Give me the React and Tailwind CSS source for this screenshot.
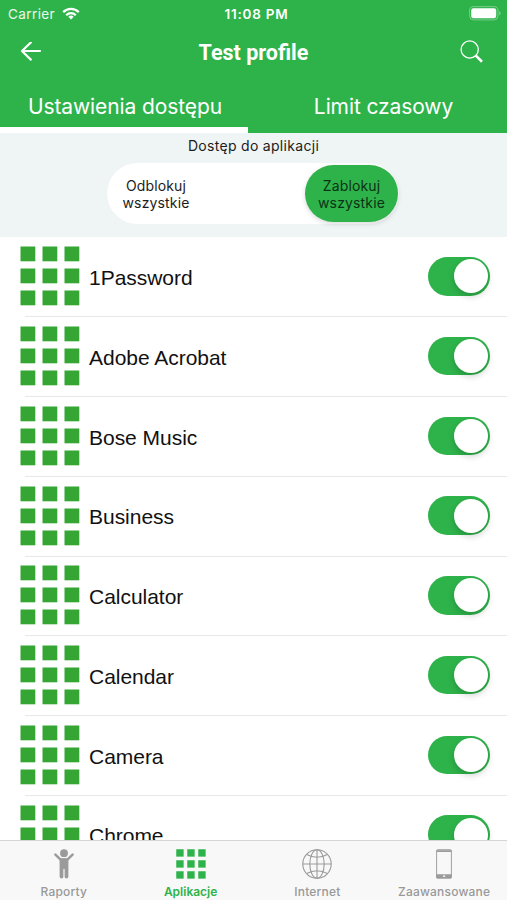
const APPS = [
  "1Password",
  "Adobe Acrobat",
  "Bose Music",
  "Business",
  "Calculator",
  "Calendar",
  "Camera",
  "Chrome"
];

function GridIcon({ className }) {
  return (
    <svg viewBox="-0.5 -0.5 60 60" className={className} fill="currentColor">
      {[0, 22, 44].map((y) =>
        [0, 22, 44].map((x) => <rect key={`${x}-${y}`} x={x} y={y} width="14.8" height="14.8" />)
      )}
    </svg>
  );
}

function WifiIcon() {
  return (
    <svg viewBox="0 0 18 13" className="ml-[7px] h-[13px] w-[18px]" fill="none" stroke="white" strokeWidth="2.2">
      <path d="M1.2 5.1a11 11 0 0 1 15.6 0" />
      <path d="M4.2 8.2a6.8 6.8 0 0 1 9.6 0" />
      <path d="M9 12.4 6.3 9.8a3.9 3.9 0 0 1 5.4 0z" fill="white" stroke="none" />
    </svg>
  );
}

function BatteryIcon() {
  return (
    <svg viewBox="0 0 32 15" className="h-[15px] w-8" fill="none">
      <rect x="0.6" y="0.6" width="28.4" height="13.3" rx="4" stroke="white" strokeOpacity="0.35" />
      <rect x="2.2" y="2.3" width="25" height="9.9" rx="2.2" fill="white" />
      <path d="M30.4 5v4.6c1.4-.8 1.4-3.8 0-4.6z" fill="white" fillOpacity="0.5" />
    </svg>
  );
}

function PersonIcon() {
  return (
    <svg viewBox="0 0 20 30" className="h-[30px] w-5" fill="#9b9b9b">
      <circle cx="10" cy="4.2" r="3.9" />
      <path
        d="M1.4 5.6 6.6 10.6H13.4L18.6 5.6"
        fill="none"
        stroke="#9b9b9b"
        strokeWidth="2.5"
        strokeLinecap="round"
        strokeLinejoin="round"
      />
      <path d="M5.6 9.6h8.8v18a1.9 1.9 0 0 1-3.8 0V20H9.4v7.6a1.9 1.9 0 0 1-3.8 0z" />
    </svg>
  );
}

function GlobeIcon() {
  return (
    <svg viewBox="0 0 30 30" className="size-[30px]" fill="none" stroke="#9b9b9b" strokeWidth="1.1">
      <circle cx="15" cy="15" r="14.2" />
      <ellipse cx="15" cy="15" rx="7.2" ry="14.2" />
      <path d="M15 .8v28.4M.8 15h28.4M4.6 5.6q10.4 5.4 20.8 0M4.6 24.4q10.4-5.4 20.8 0" />
    </svg>
  );
}

function PhoneIcon() {
  return (
    <svg viewBox="0 0 16 30" className="h-[30px] w-4">
      <rect x="0.6" y="0.7" width="14.8" height="28.5" rx="1" fill="none" stroke="#a0a0a0" />
      <path d="M.4 1.2h15.2v1.9H.4zM.4 25.2h15.2v4H.4z" fill="#9b9b9b" />
      <path d="M7 27.2h2.2" stroke="#f8f8f8" strokeWidth="1.4" />
    </svg>
  );
}

function Switch() {
  return (
    <div className="flex h-[38.5px] w-[62.5px] items-center justify-end rounded-full bg-[#2eb34b] pr-[2px]">
      <div className="size-[34px] rounded-full bg-white shadow-[0_3px_7px_rgba(0,0,0,0.2)]" />
    </div>
  );
}

function AppRow({ name }) {
  return (
    <div className="flex h-[79.75px] shrink-0 items-center pr-[17px] pl-5">
      <GridIcon className="size-[60px] shrink-0 text-[#35a634]" />
      <span className="ml-[9px] flex-1 pt-[3px] font-['Liberation_Sans',sans-serif] text-[21px] tracking-[-0.03px] text-[#111]">
        {name}
      </span>
      <Switch />
    </div>
  );
}

function TabItem({ icon, label, active }) {
  return (
    <div className="flex flex-1 flex-col items-center pt-2 pl-[1px]">
      {icon}
      <span
        className={`mt-[5px] text-[12px] leading-4 ${
          active ? "font-semibold text-[#2eb34b]" : "font-medium tracking-[0.2px] text-[#999]"
        }`}
      >
        {label}
      </span>
    </div>
  );
}

function Header() {
  return (
    <header className="h-[132.5px] shrink-0 bg-[#2eb34b] text-white">
      <div className="grid h-[27px] grid-cols-3 items-center pr-[6px] pl-[8px]">
        <div className="flex items-center">
          <span className="pt-px text-[13.5px] tracking-[0.4px] text-white/90">Carrier</span>
          <WifiIcon />
        </div>
        <span className="pt-px pl-[4px] text-center text-[13.5px] font-semibold tracking-[0.8px]">11:08 PM</span>
        <div className="flex justify-end">
          <BatteryIcon />
        </div>
      </div>
      <div className="flex h-[50px] items-center justify-between pr-6 pl-5">
        <svg viewBox="0 0 22 20" className="h-5 w-[22px]" fill="none" stroke="white" strokeWidth="2.2">
          <path d="M10.8 .5 2 9l8.8 8.6M2 9h18" strokeLinecap="round" strokeLinejoin="round" />
        </svg>
        {/* zero tracking keeps the "fi" ligature */}
        <h1 className="pt-[3px] pl-[5px] font-[Roboto,sans-serif] text-[21.5px] font-bold">Test profile</h1>
        <svg viewBox="0 0 24 24" className="-mr-px size-6" fill="none" stroke="white">
          <circle cx="9.7" cy="9.5" r="8.6" strokeWidth="1.3" />
          <path d="M15.6 15.4 22 21.7" strokeWidth="2.6" />
        </svg>
      </div>
      <div className="flex h-[55.5px] text-[21px] leading-[26px] tracking-[-0.1px]">
        <div className="w-[248px] border-b-[6px] border-white pt-[17px] pl-[2px] text-center">Ustawienia dostępu</div>
        <div className="flex-1 pt-[17px] pl-[12px] text-center">Limit czasowy</div>
      </div>
    </header>
  );
}

export default function App() {
  return (
    <div className="flex h-[900px] w-[507px] flex-col overflow-hidden bg-white font-[Inter,sans-serif]">
      <Header />
      <section className="flex h-[104px] shrink-0 flex-col items-center bg-[#eff4f5] text-[14px] text-[#1c1c1c]">
        <p className="mt-1 leading-[18px] tracking-[0.3px]">Dostęp do aplikacji</p>
        <div className="mt-2 mr-[1px] flex h-[61px] w-[292px] items-center justify-between rounded-full bg-white pr-[1px] pl-[13px] text-center leading-[17px] tracking-[0.15px]">
          <span className="w-[72px] pt-px">Odblokuj wszystkie</span>
          <span className="flex h-[57px] w-[93px] items-center justify-center rounded-full bg-[#2eb34b] px-2 text-[#0b3213] shadow-[0_2px_5px_rgba(0,0,0,0.15)]">
            <span className="w-[72px] pt-px">Zablokuj wszystkie</span>
          </span>
        </div>
      </section>
      <main className="flex min-h-0 flex-1 flex-col overflow-hidden">
        {APPS.map((name, index) => (
          <div key={name} className="shrink-0">
            {index > 0 && <div className="-mb-px ml-[25px] h-px bg-[#e6e8e9]" />}
            <AppRow name={name} />
          </div>
        ))}
      </main>
      <nav className="flex h-[60px] shrink-0 border-t border-[#d5d5d5] bg-[#f8f8f8]">
        <TabItem icon={<PersonIcon />} label="Raporty" />
        <TabItem icon={<GridIcon className="size-[30px] text-[#2eb34b]" />} label="Aplikacje" active />
        <TabItem icon={<GlobeIcon />} label="Internet" />
        <TabItem icon={<PhoneIcon />} label="Zaawansowane" />
      </nav>
    </div>
  );
}
